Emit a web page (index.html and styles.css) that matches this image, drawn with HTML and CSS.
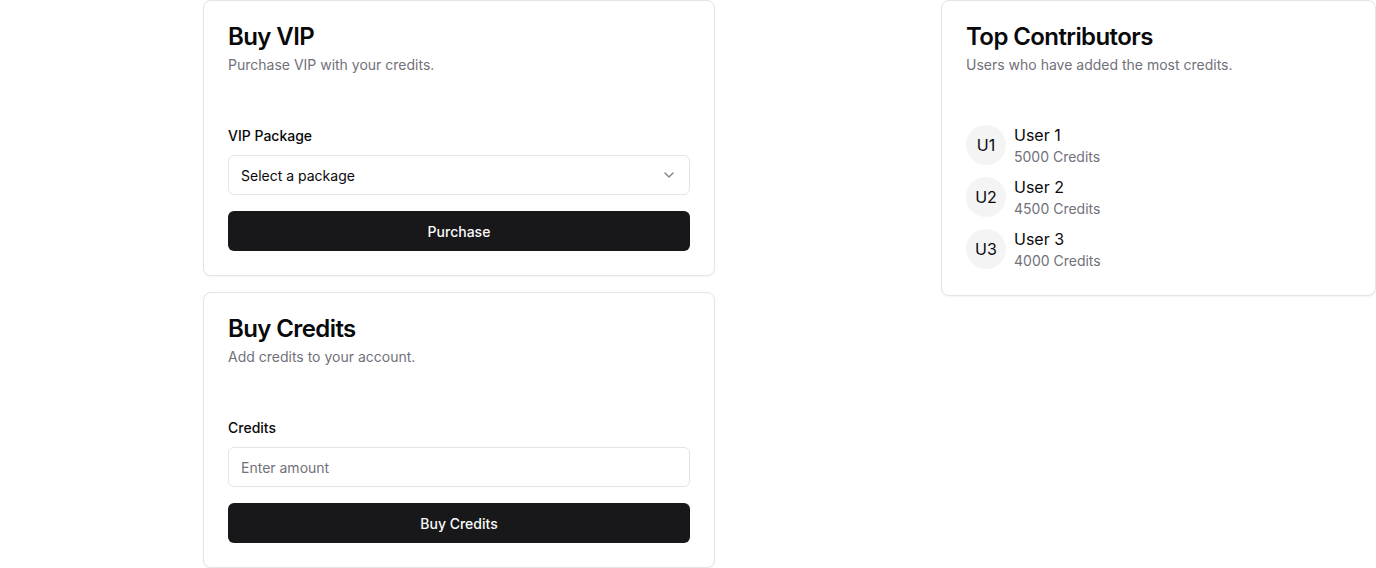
FILE: index.html
```html
<!DOCTYPE html>
<html lang="en">
<head>
<meta charset="utf-8">
<title>VIP & Credits</title>
<link rel="stylesheet" href="styles.css">
</head>
<body>
<div class="page">
  <div class="column left">
    <section class="card">
      <header class="card-header">
        <h2 class="card-title">Buy VIP</h2>
        <p class="card-desc">Purchase VIP with your credits.</p>
      </header>
      <div class="card-content form">
        <label class="label">VIP Package</label>
        <div class="select">
          <span>Select a package</span>
          <svg class="chev" width="16" height="16" viewBox="0 0 24 24" fill="none" stroke="currentColor" stroke-width="2" stroke-linecap="round" stroke-linejoin="round"><path d="m6 9 6 6 6-6"/></svg>
        </div>
        <button class="btn">Purchase</button>
      </div>
    </section>
    <section class="card">
      <header class="card-header">
        <h2 class="card-title">Buy Credits</h2>
        <p class="card-desc">Add credits to your account.</p>
      </header>
      <div class="card-content form">
        <label class="label">Credits</label>
        <input class="input" type="text" placeholder="Enter amount">
        <button class="btn">Buy Credits</button>
      </div>
    </section>
  </div>
  <div class="column right">
    <section class="card">
      <header class="card-header">
        <h2 class="card-title">Top Contributors</h2>
        <p class="card-desc">Users who have added the most credits.</p>
      </header>
      <div class="card-content list">
        <div class="user">
          <div class="avatar">U1</div>
          <div class="info"><div class="name">User 1</div><div class="credits">5000 Credits</div></div>
        </div>
        <div class="user">
          <div class="avatar">U2</div>
          <div class="info"><div class="name">User 2</div><div class="credits">4500 Credits</div></div>
        </div>
        <div class="user">
          <div class="avatar">U3</div>
          <div class="info"><div class="name">User 3</div><div class="credits">4000 Credits</div></div>
        </div>
      </div>
    </section>
  </div>
</div>
</body>
</html>
```
FILE: styles.css
```css
* { box-sizing: border-box; }
html, body { margin: 0; padding: 0; background: #ffffff; }
body {
  font-family: Inter, "Noto Sans", "Liberation Sans", sans-serif;
  color: #09090b;
  -webkit-font-smoothing: antialiased;
}
.page {
  display: flex;
  align-items: flex-start;
  gap: 226px;
  padding-left: 203px;
}
.column { display: flex; flex-direction: column; gap: 16px; }
.left { width: 512px; }
.right { width: 435px; }
.card {
  border: 1px solid #e4e4e7;
  border-radius: 8px;
  background: #fff;
  box-shadow: 0 1px 2px rgba(0,0,0,0.05);
}
.card-header { padding: 24px 24px 24px; }
.card-title {
  margin: 0;
  font-size: 24px;
  line-height: 24px;
  font-weight: 600;
  letter-spacing: -0.6px;
}
.card-desc {
  margin: 6px 0 0;
  font-size: 14px;
  line-height: 20px;
  color: #71717a;
}
.card-content { padding: 0 24px 24px; }
.form { display: flex; flex-direction: column; padding-top: 27px; }
.label {
  font-size: 14px;
  line-height: 20px;
  font-weight: 500;
  margin-bottom: 9px;
}
.select, .input {
  height: 40px;
  border: 1px solid #e4e4e7;
  border-radius: 6px;
  padding: 0 12px;
  font-family: inherit;
  font-size: 14px;
  color: #09090b;
  background: #fff;
}
.select {
  display: flex;
  align-items: center;
  justify-content: space-between;
}
.chev { color: #09090b; opacity: 0.5; }
.input { outline: none; width: 100%; }
.input::placeholder { color: #71717a; }
.btn {
  margin-top: 16px;
  height: 40px;
  padding-bottom: 1px;
  border: none;
  border-radius: 6px;
  background: #18181b;
  color: #fafafa;
  font-family: inherit;
  font-size: 14px;
  font-weight: 500;
}
.list { display: flex; flex-direction: column; gap: 8px; padding-top: 24px; }
.user { display: flex; align-items: center; gap: 8px; }
.avatar {
  width: 40px;
  height: 40px;
  border-radius: 50%;
  background: #f4f4f5;
  display: flex;
  align-items: center;
  justify-content: center;
  font-size: 16px;
}
.name { font-size: 16px; line-height: 24px; }
.credits { font-size: 14px; line-height: 20px; color: #71717a; }
```
